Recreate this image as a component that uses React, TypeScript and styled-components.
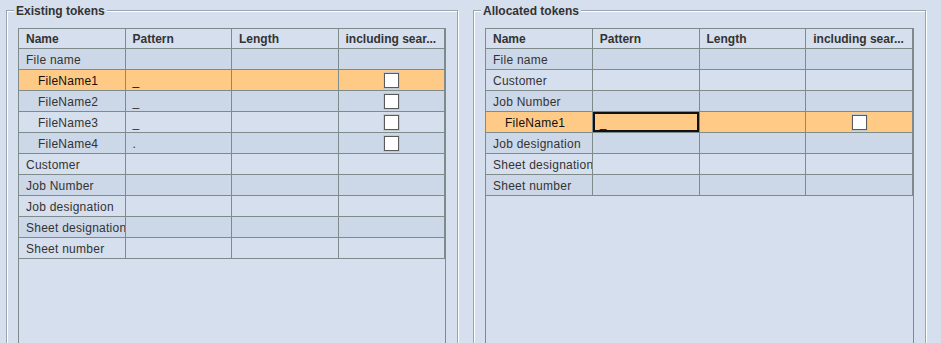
import React from "react";
import styled, { createGlobalStyle } from "styled-components";

type Row = {
  name: string;
  pattern?: string;
  check?: boolean;
  child?: boolean;
  selected?: boolean;
  editing?: boolean;
};

const existing: Row[] = [
  { name: "File name" },
  { name: "FileName1", pattern: "_", check: true, child: true, selected: true },
  { name: "FileName2", pattern: "_", check: true, child: true },
  { name: "FileName3", pattern: "_", check: true, child: true },
  { name: "FileName4", pattern: ".", check: true, child: true },
  { name: "Customer" },
  { name: "Job Number" },
  { name: "Job designation" },
  { name: "Sheet designation" },
  { name: "Sheet number" },
];

const allocated: Row[] = [
  { name: "File name" },
  { name: "Customer" },
  { name: "Job Number" },
  {
    name: "FileName1",
    pattern: "_",
    check: true,
    child: true,
    selected: true,
    editing: true,
  },
  { name: "Job designation" },
  { name: "Sheet designation" },
  { name: "Sheet number" },
];

const columns = ["Name", "Pattern", "Length", "including sear..."];

const TokenTable = ({ rows }: { rows: Row[] }) => {
  return (
    <ScrollPane>
      <Grid>
        {columns.map((c) => (
          <HeadCell key={c}>{c}</HeadCell>
        ))}
        {rows.map((r, i) => {
          const tone = r.selected ? "selected" : i % 2 === 0 ? "dark" : "light";
          return (
            <React.Fragment key={r.name}>
              <Cell $tone={tone} $indent={r.child}>
                {r.name}
              </Cell>
              <Cell $tone={tone} $editing={r.editing}>
                {r.pattern}
              </Cell>
              <Cell $tone={tone} />
              <Cell $tone={tone} $center>
                {r.check && <Check />}
              </Cell>
            </React.Fragment>
          );
        })}
      </Grid>
    </ScrollPane>
  );
};

const App = () => {
  return (
    <>
      <GlobalStyle />
      <Root>
        <Panel $width={452}>
          <Legend>Existing tokens</Legend>
          <TokenTable rows={existing} />
        </Panel>
        <Panel $width={453}>
          <Legend>Allocated tokens</Legend>
          <TokenTable rows={allocated} />
        </Panel>
      </Root>
    </>
  );
};

/**
 * styles
 */

const GlobalStyle = createGlobalStyle`
  html, body {
    margin: 0;
    height: 343px;
    overflow: hidden;
    background: #d6dfee;
  }
  body {
    font-family: "Liberation Sans", Arial, sans-serif;
    font-size: 12px;
    color: #333;
  }
`;

const Root = styled.div`
  display: flex;
  gap: 15px;
  height: 343px;
  box-sizing: border-box;
  padding: 10px 0 0 6px;
  overflow: hidden;
`;

const Panel = styled.div<{ $width: number }>`
  display: flex;
  flex-direction: column;
  width: ${(p) => p.$width}px;
  height: 360px;
  flex-shrink: 0;
  box-sizing: border-box;
  border: 1px solid #9ba4ac;
  box-shadow: inset 1px 1px 0 #ffffff, 1px 1px 0 #ffffff;
`;

const Legend = styled.div`
  align-self: flex-start;
  margin: -7px 0 0 7px;
  padding: 0 2px;
  line-height: 14px;
  font-weight: bold;
  color: #333;
  background: #d6dfee;
`;

const ScrollPane = styled.div`
  flex: 1;
  margin: 10px 11px 11px;
  border: 1px solid #7f8a8a;
`;

const Grid = styled.div`
  display: grid;
  grid-template-columns: repeat(4, 1fr);
`;

const HeadCell = styled.div`
  height: 20px;
  box-sizing: border-box;
  padding: 2px 0 0 7px;
  line-height: 17px;
  font-weight: bold;
  white-space: nowrap;
  overflow: hidden;
  border-right: 1px solid #7f8a8a;
  border-bottom: 1px solid #7f8a8a;
`;

const tones = {
  light: "#d6dfee",
  dark: "#ccd7e7",
  selected: "#ffc986",
};

const Cell = styled.div<{
  $tone: keyof typeof tones;
  $indent?: boolean;
  $center?: boolean;
  $editing?: boolean;
}>`
  height: 21px;
  box-sizing: border-box;
  padding: 2px 0 0 ${(p) => (p.$indent ? 19 : 7)}px;
  line-height: 18px;
  letter-spacing: 0.25px;
  white-space: nowrap;
  overflow: hidden;
  background: ${(p) => tones[p.$tone]};
  color: ${(p) => (p.$tone === "selected" ? "#111" : "#333")};
  border-right: 1px solid #7f8a8a;
  border-bottom: 1px solid #7f8a8a;
  box-shadow: ${(p) => (p.$editing ? "inset 0 0 0 2px #111" : "none")};

  ${(p) =>
    p.$center &&
    `
    display: flex;
    align-items: center;
    justify-content: center;
    padding: 0;
  `}
`;

const Check = styled.span`
  width: 13px;
  height: 13px;
  background: #fff;
  border: 1px solid #5a5a5a;
  box-shadow: 0 0 0 1px #c6c9cc;
`;

export default App;
